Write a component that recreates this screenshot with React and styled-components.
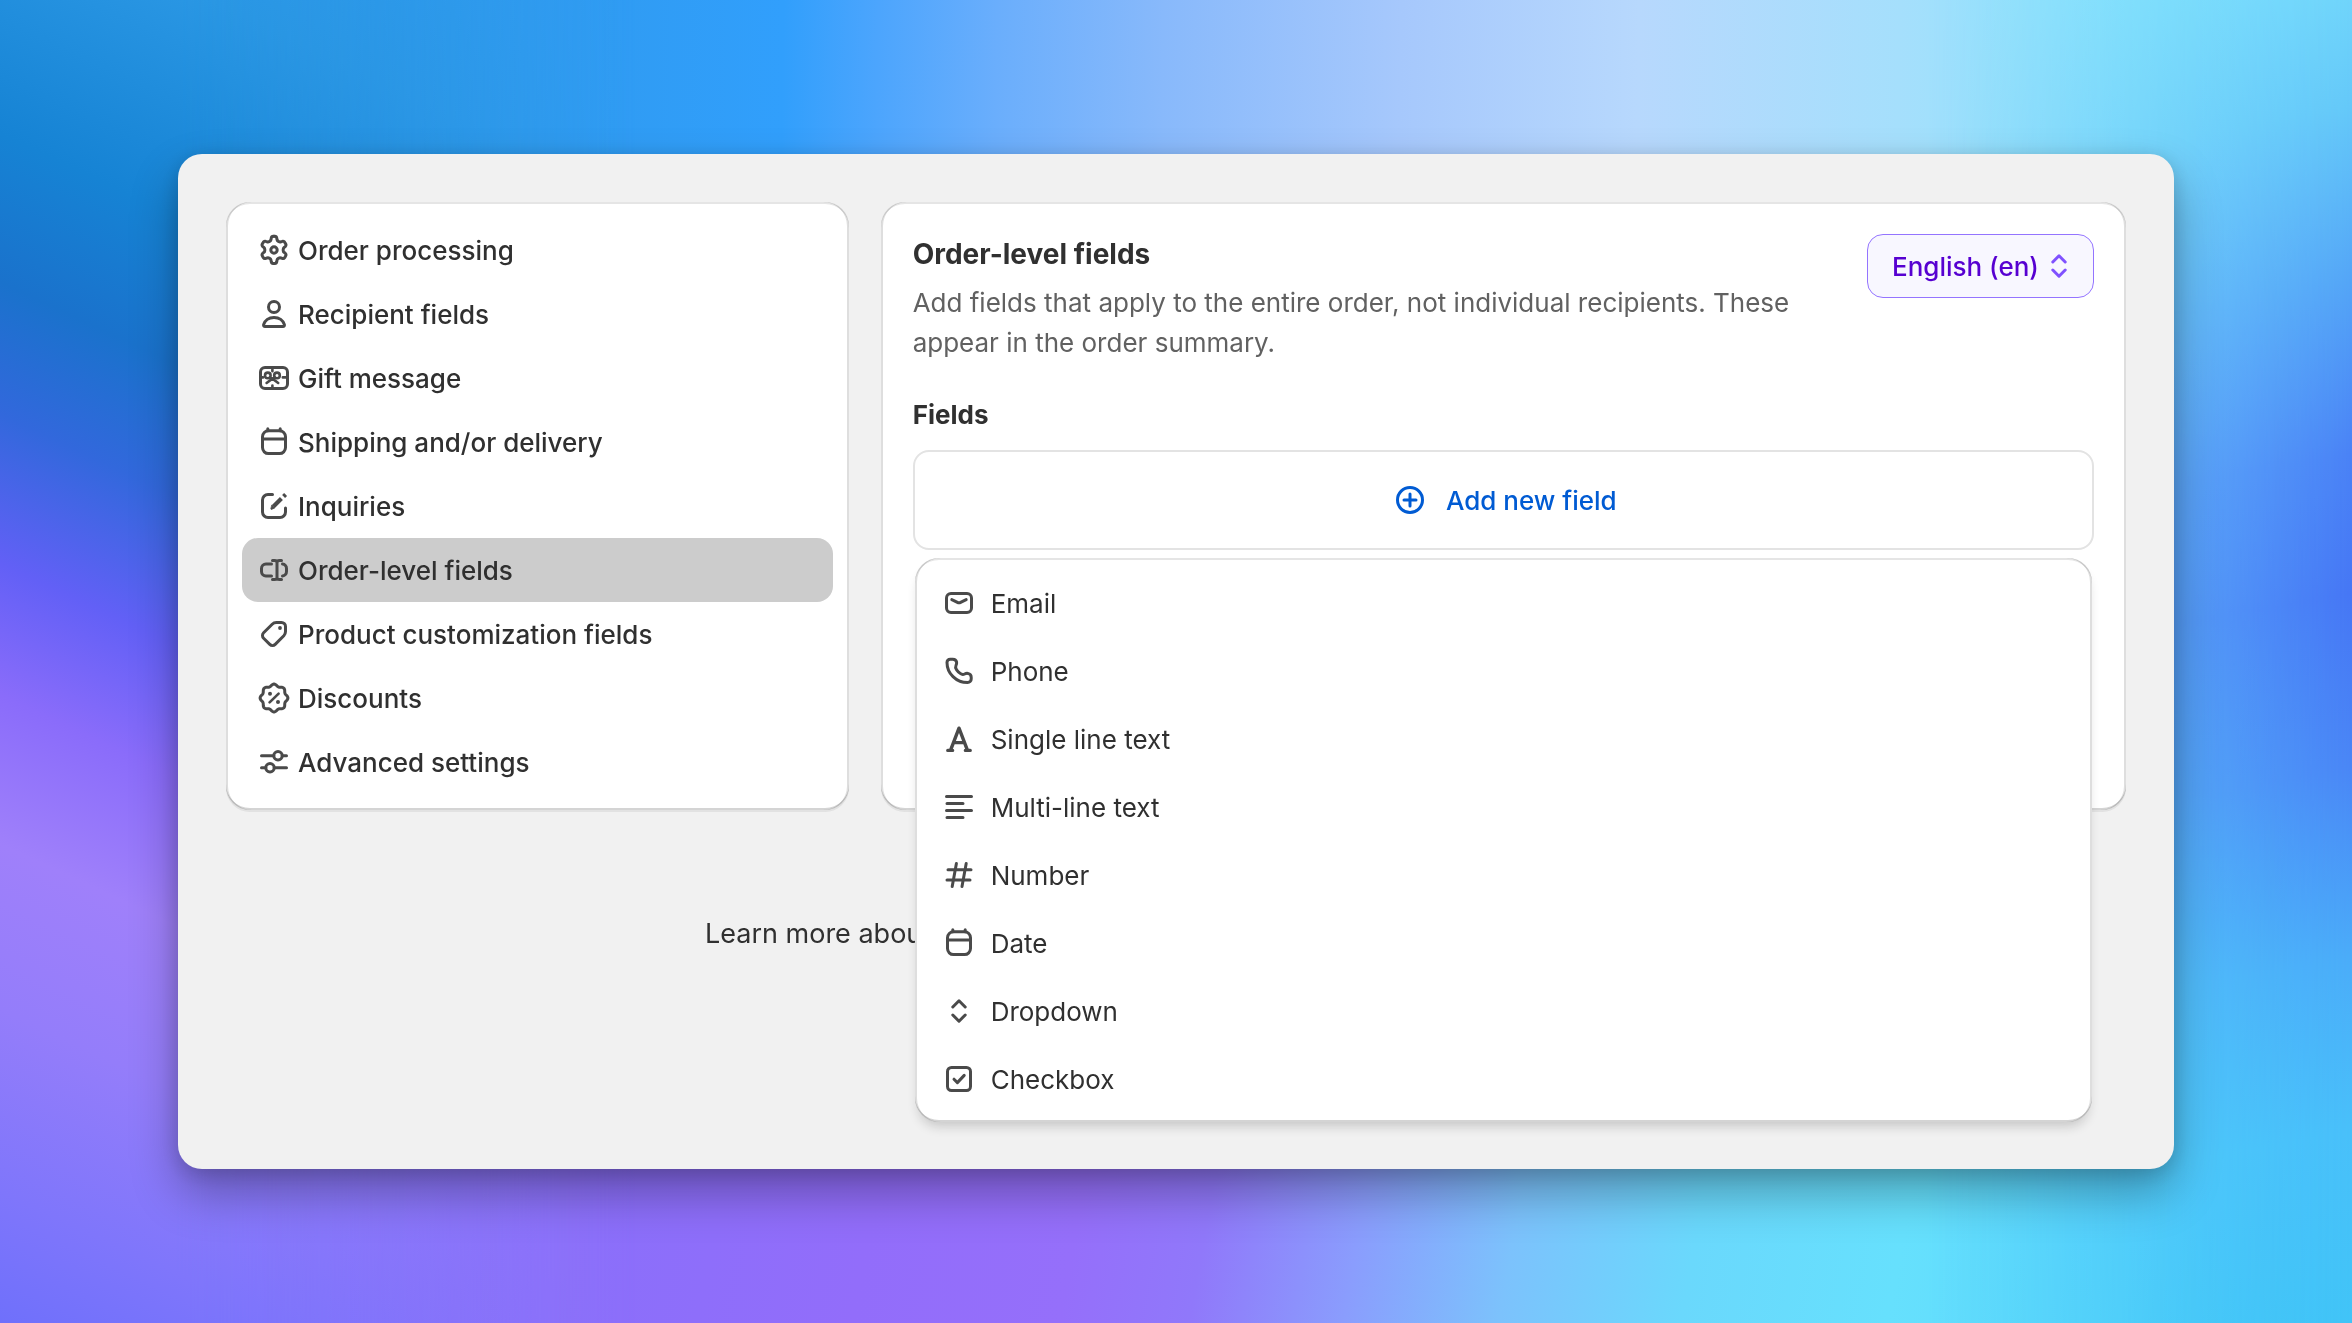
import React, { useState } from "react";
import styled, { createGlobalStyle } from "styled-components";

const gearHalf =
  "M10 3.1h.4c.5 0 .9.4 1 1l.1.7c.1.4.3.7.7.9l.2.1c.3.2.7.2 1.1.1l.6-.2c.5-.2 1.1 0 1.3.5l.4.7c.3.5.2 1-.2 1.4l-.5.4c-.3.3-.5.6-.5 1v.5c0 .4.2.8.5 1l.5.4c.4.4.5.9.2 1.4l-.4.7c-.3.5-.8.7-1.3.5l-.6-.2c-.4-.1-.8-.1-1.1.1l-.2.1c-.4.2-.6.5-.7.9l-.1.7c-.1.6-.5 1-1 1h-.4";

// eight soft bumps around a circle
const badgePoints = Array.from({ length: 96 }, (_, i) => {
  const angle = (i / 96) * Math.PI * 2;
  const radius = 6.45 + 0.5 * Math.cos(angle * 8);
  const x = 10 + radius * Math.cos(angle);
  const y = 10 + radius * Math.sin(angle);
  return `${x.toFixed(2)},${y.toFixed(2)}`;
}).join(" ");

const icons = {
  settings: (
    <>
      <path d={gearHalf} />
      <path d={gearHalf} transform="matrix(-1 0 0 1 20 0)" />
      <circle cx="10" cy="10" r="1.6" />
    </>
  ),
  person: (
    <>
      <circle cx="10" cy="6.5" r="2.75" />
      <path d="M10 11.75c-2.6 0-4.6 1.5-5.2 3.6-.1.5.2.9.7.9h9c.5 0 .8-.4.7-.9-.6-2.1-2.6-3.6-5.2-3.6z" />
    </>
  ),
  gift: (
    <>
      <rect x="3.25" y="4.75" width="13.5" height="10.5" rx="2.25" />
      <g strokeWidth="1.3">
        <circle cx="6.9" cy="8.7" r="1.4" />
        <circle cx="11.5" cy="8.7" r="1.4" />
        <path d="M9.2 10.3l-2.9 2.2M9.2 10.3l2.9 2.2M7.8 9.9l1.4.4 1.4-.4M9.2 5v1.6M9.2 13.8v1.2M14.4 9.7h2.2M3.5 9.7h1" />
      </g>
    </>
  ),
  calendar: (
    <>
      <rect x="4.25" y="4.4" width="11.5" height="11.4" rx="3" />
      <path d="M4.25 8.5h11.5M6.9 3.4v1M13.1 3.4v1" />
    </>
  ),
  compose: (
    <>
      <path d="M9.25 4.25H7A2.75 2.75 0 0 0 4.25 7v6A2.75 2.75 0 0 0 7 15.75h6A2.75 2.75 0 0 0 15.75 13v-2" />
      <path d="M9.7 10.3l4-4" strokeWidth="2.1" strokeLinecap="butt" />
      <path
        d="M9 9.6l1.4 1.4-1.7.7c-.2 0-.4-.2-.3-.4z"
        strokeWidth=".4"
        fill="currentColor"
      />
      <path d="M14.8 5.2l1-1" strokeWidth="2.1" strokeLinecap="butt" />
    </>
  ),
  input: (
    <path d="M8.75 7H6a2.25 2.25 0 0 0-2.25 2.25v1.5A2.25 2.25 0 0 0 6 13h2.75M14.25 7a2.25 2.25 0 0 1 2 2.25v1.5a2.25 2.25 0 0 1-2 2.25M11.5 6.25v7.5M9.25 5.25h1c.7 0 1.25.4 1.25 1 0-.6.55-1 1.25-1h1M9.25 14.75h1c.7 0 1.25-.4 1.25-1 0 .6.55 1 1.25 1h1" />
  ),
  tag: (
    <>
      <path d="M11.2 4.25h2.55c1.1 0 2 .9 2 2v2.55c0 .8-.3 1.5-.85 2.1l-4.3 4.3c-.75.75-1.95.75-2.7 0l-3.1-3.1c-.75-.75-.75-1.95 0-2.7l4.3-4.3c.55-.55 1.3-.85 2.1-.85z" />
      <circle cx="13" cy="7" r=".95" fill="currentColor" stroke="none" />
    </>
  ),
  discount: (
    <>
      <polygon points={badgePoints} />
      <path d="M7.8 12.2l4.5-4.4" strokeWidth="1.3" />
      <circle cx="8" cy="7.9" r="1" fill="currentColor" stroke="none" />
      <circle cx="12" cy="12" r="1" fill="currentColor" stroke="none" />
    </>
  ),
  sliders: (
    <>
      <path d="M3.75 6.9H9.9M14.1 6.9h2.15M3.75 12.9H5.9M10.1 12.9h6.15" />
      <circle cx="12" cy="6.9" r="2.1" />
      <circle cx="8" cy="12.9" r="2.1" />
    </>
  ),
  email: (
    <>
      <rect x="3.75" y="5.2" width="12.5" height="9.6" rx="2.25" />
      <path d="M6.4 8.3l2.8 1.4c.5.25 1.1.25 1.6 0l2.8-1.4" />
    </>
  ),
  phone: (
    <path d="M5.6 4.1h1.3c.9 0 1.7.6 1.9 1.5.1.6 0 1-.3 1.6-.4.8-.3 1.4.3 2.2.5.7 1.1 1.3 1.8 1.8.8.6 1.4.7 2.2.3.6-.3 1-.4 1.6-.3.9.2 1.7 1 1.7 1.9v.9c0 1-.8 1.8-1.8 1.8-5.7 0-10.3-4.6-10.3-10.1 0-.9.7-1.6 1.6-1.6z" />
  ),
  letter: (
    <path
      d="M5.8 15.6 10 4.6l4.2 11M7.4 11.8h5.2M4.4 15.7h2.4M13.2 15.7h2.4"
      strokeWidth="1.7"
    />
  ),
  lines: <path d="M3.75 4.75h12.5M4 8.25h8M3.75 11.75h12.5M4 15.25h8" />,
  hash: <path d="M8.7 4.25l-2.1 11.5M13.6 4.25l-2.1 11.5M4.5 7.4h11.5M4 12.5h11.5" />,
  updown: <path d="M6.9 8l3.1-3.1L13.1 8M6.9 12l3.1 3.1 3.1-3.1" />,
  checkbox: (
    <>
      <rect x="4.25" y="4.25" width="11.5" height="11.5" rx="2" />
      <path d="M7.5 10.1l1.7 1.7 3.4-3.6" />
    </>
  ),
  plus: (
    <>
      <circle cx="10" cy="10" r="6.25" />
      <path d="M10 7v6M7 10h6" />
    </>
  ),
};

const navItems = [
  { icon: "settings", label: "Order processing" },
  { icon: "person", label: "Recipient fields" },
  { icon: "gift", label: "Gift message" },
  { icon: "calendar", label: "Shipping and/or delivery" },
  { icon: "compose", label: "Inquiries" },
  { icon: "input", label: "Order-level fields" },
  { icon: "tag", label: "Product customization fields" },
  { icon: "discount", label: "Discounts" },
  { icon: "sliders", label: "Advanced settings" },
];

const fieldTypes = [
  { icon: "email", label: "Email" },
  { icon: "phone", label: "Phone" },
  { icon: "letter", label: "Single line text" },
  { icon: "lines", label: "Multi-line text" },
  { icon: "hash", label: "Number" },
  { icon: "calendar", label: "Date" },
  { icon: "updown", label: "Dropdown" },
  { icon: "checkbox", label: "Checkbox" },
];

const Icon = ({ name, color }) => (
  <Svg viewBox="0 0 20 20" $color={color} aria-hidden="true">
    {icons[name]}
  </Svg>
);

const App = () => {
  const [active, setActive] = useState("Order-level fields");
  const [open, setOpen] = useState(true);

  return (
    <>
      <GlobalStyle />
      <Backdrop>
        <TopGlow />
        <RightGlow />
        <LeftGlow />
      </Backdrop>
      <Page>
        <Window>
          <Columns>
            <Nav>
              {navItems.map((item) => (
                <NavItem
                  key={item.label}
                  type="button"
                  $active={item.label === active}
                  onClick={() => setActive(item.label)}
                >
                  <Icon name={item.icon} />
                  <Label>{item.label}</Label>
                </NavItem>
              ))}
            </Nav>
            <Panel>
              <Header>
                <Intro>
                  <Title>Order-level fields</Title>
                  <Description>
                    Add fields that apply to the entire order, not individual
                    recipients. These appear in the order summary.
                  </Description>
                </Intro>
                <Language>
                  <LanguageSelect aria-label="Language" defaultValue="en">
                    <option value="en">English (en)</option>
                  </LanguageSelect>
                  <Icon name="updown" color="#8051ff" />
                </Language>
              </Header>
              <Subtitle>Fields</Subtitle>
              <AddArea>
                <AddButton type="button" onClick={() => setOpen(!open)}>
                  <Icon name="plus" color="#005bd3" />
                  <Label>Add new field</Label>
                </AddButton>
                {open && (
                  <Menu>
                    {fieldTypes.map((field) => (
                      <MenuItem key={field.label} type="button">
                        <Icon name={field.icon} />
                        <Label>{field.label}</Label>
                      </MenuItem>
                    ))}
                  </Menu>
                )}
              </AddArea>
            </Panel>
          </Columns>
          <Footer>Learn more about</Footer>
        </Window>
      </Page>
    </>
  );
};

const GlobalStyle = createGlobalStyle`
  * {
    box-sizing: border-box;
  }
  body {
    margin: 0;
    color: #303030;
    font-family: Inter, "Liberation Sans", sans-serif;
    font-size: 26px;
    line-height: 40px;
    -webkit-font-smoothing: antialiased;
  }
  button, select {
    font: inherit;
    color: inherit;
    border: none;
    background: none;
    cursor: pointer;
  }
`;

const Backdrop = styled.div`
  position: fixed;
  inset: 0;
  z-index: -1;
  background: linear-gradient(
    100deg,
    #6f70fb 9%,
    #7c70fb 20%,
    #8a6ffa 30%,
    #926dfa 42%,
    #956ffa 50%,
    #9078fa 55%,
    #8a9dfd 61%,
    #7cc2fc 67%,
    #6ad8fc 74%,
    #66e0fd 82%,
    #5cdafc 91%,
    #3fc1f5 100%
  );
`;

const Glow = styled.div`
  position: absolute;
  inset: 0;
`;

const TopGlow = styled(Glow)`
  background: linear-gradient(
    91deg,
    #1b86cc 0%,
    #2792dd 10%,
    #2f9aee 22%,
    #319ffc 33%,
    #4ca5fd 37%,
    #6aaefc 42%,
    #88b9fb 49%,
    #a6c8fc 59%,
    #b7d8fd 69%,
    #a5dffc 80%,
    #8de5fd 90%,
    #80e1fc 100%
  );
  mask-image: linear-gradient(to bottom, #000 12%, transparent 70%);
`;

const RightGlow = styled(Glow)`
  background: linear-gradient(
    170deg,
    #86e3fd 0%,
    #7ce1fd 17%,
    #64c8f9 30%,
    #54a5f7 40%,
    #4a82f6 50%,
    #4676f5 58%,
    #4a86f6 68%,
    #4bacf9 79%,
    #49c0fa 89%,
    #41c4f7 100%
  );
  mask-image: linear-gradient(to left, #000 0%, rgba(0, 0, 0, 0.6) 8%, transparent 18%);
`;

const LeftGlow = styled(Glow)`
  right: 70%;
  background: linear-gradient(
    205deg,
    #33a0f6 0%,
    #2a97e4 14%,
    #1683d4 28%,
    #1a72cc 37%,
    #3268dc 45%,
    #6260f6 54%,
    #8a6cfa 62%,
    #9f80fa 71%,
    #947dfa 81%,
    #7f76fb 92%,
    #6f70fb 100%
  );
  mask-image: linear-gradient(to right, #000 25%, transparent 90%);
`;

const Page = styled.main`
  display: flex;
  min-height: 100vh;
  padding: 154px 178px;
`;

const Window = styled.div`
  flex: 1;
  padding: 48px;
  background: #f1f1f1;
  border-radius: 24px;
  box-shadow: 0 4px 20px rgba(0, 0, 0, 0.15), 0 24px 48px rgba(0, 0, 0, 0.3);
`;

const Columns = styled.div`
  display: grid;
  grid-template-columns: 1fr 2fr;
  gap: 32px;
`;

const Card = styled.section`
  background: #fff;
  border-radius: 24px;
  box-shadow: inset 2px 0 0 rgba(0, 0, 0, 0.13),
    inset -2px 0 0 rgba(0, 0, 0, 0.13), inset 0 -2px 0 rgba(0, 0, 0, 0.17),
    inset 0 2px 0 rgba(204, 204, 204, 0.5), 0 2px 0 rgba(26, 26, 26, 0.07);
`;

const Nav = styled(Card).attrs({ as: "nav" })`
  display: flex;
  flex-direction: column;
  padding: 16px;
`;

const NavItem = styled.button`
  display: flex;
  align-items: center;
  gap: 4px;
  height: 64px;
  padding: 0 12px;
  border-radius: 16px;
  font-weight: 550;
  text-align: left;
  background: ${({ $active }) => ($active ? "#cccccc" : "transparent")};
`;

const Label = styled.span`
  padding-top: 2px;
`;

const Svg = styled.svg`
  flex: none;
  width: 40px;
  height: 40px;
  color: ${({ $color }) => $color || "#4a4a4a"};
  fill: none;
  stroke: currentColor;
  stroke-width: 1.5;
  stroke-linecap: round;
  stroke-linejoin: round;
`;

const Panel = styled(Card)`
  padding: 32px;
`;

const Header = styled.header`
  display: flex;
  justify-content: space-between;
  align-items: flex-start;
  gap: 32px;
`;

const Intro = styled.div`
  flex: 1;
`;

const Title = styled.h1`
  margin: 0 0 9px;
  font-size: 28px;
  font-weight: 650;
`;

const Description = styled.p`
  margin: 0;
  color: #616161;
`;

const Language = styled.div`
  display: flex;
  align-items: center;
  height: 64px;
  padding: 0 14px 0 24px;
  border: 1px solid #9474ff;
  border-radius: 16px;
  background: #f8f7ff;
`;

const LanguageSelect = styled.select`
  appearance: none;
  padding: 2px 0 0;
  color: #5700d1;
  font-weight: 450;
  outline: none;
`;

const Subtitle = styled.h2`
  margin: 32px 0 15px;
  font-size: 26px;
  font-weight: 650;
`;

const AddArea = styled.div`
  position: relative;
`;

const AddButton = styled.button`
  display: flex;
  justify-content: center;
  align-items: center;
  gap: 16px;
  width: 100%;
  height: 100px;
  border: 2px solid #e3e3e3;
  border-radius: 16px;
  color: #005bd3;
  font-weight: 550;
`;

const Menu = styled.div`
  position: absolute;
  top: 108px;
  left: 2px;
  right: 2px;
  display: flex;
  flex-direction: column;
  gap: 4px;
  padding: 13px 12px 11px;
  background: #fff;
  border-radius: 24px;
  box-shadow: inset 2px 0 0 rgba(0, 0, 0, 0.13),
    inset -2px 0 0 rgba(0, 0, 0, 0.13), inset 0 -2px 0 rgba(0, 0, 0, 0.17),
    inset 0 2px 0 rgba(204, 204, 204, 0.5),
    0 8px 12px -4px rgba(26, 26, 26, 0.2);
`;

const MenuItem = styled.button`
  display: flex;
  align-items: center;
  gap: 12px;
  height: 64px;
  padding: 0 12px;
  border-radius: 16px;
  text-align: left;
  &:hover {
    background: #f1f1f1;
  }
`;

const Footer = styled.footer`
  margin: 104px 4px 0;
  padding-left: 25%;
  font-size: 27px;
`;

export default App;
